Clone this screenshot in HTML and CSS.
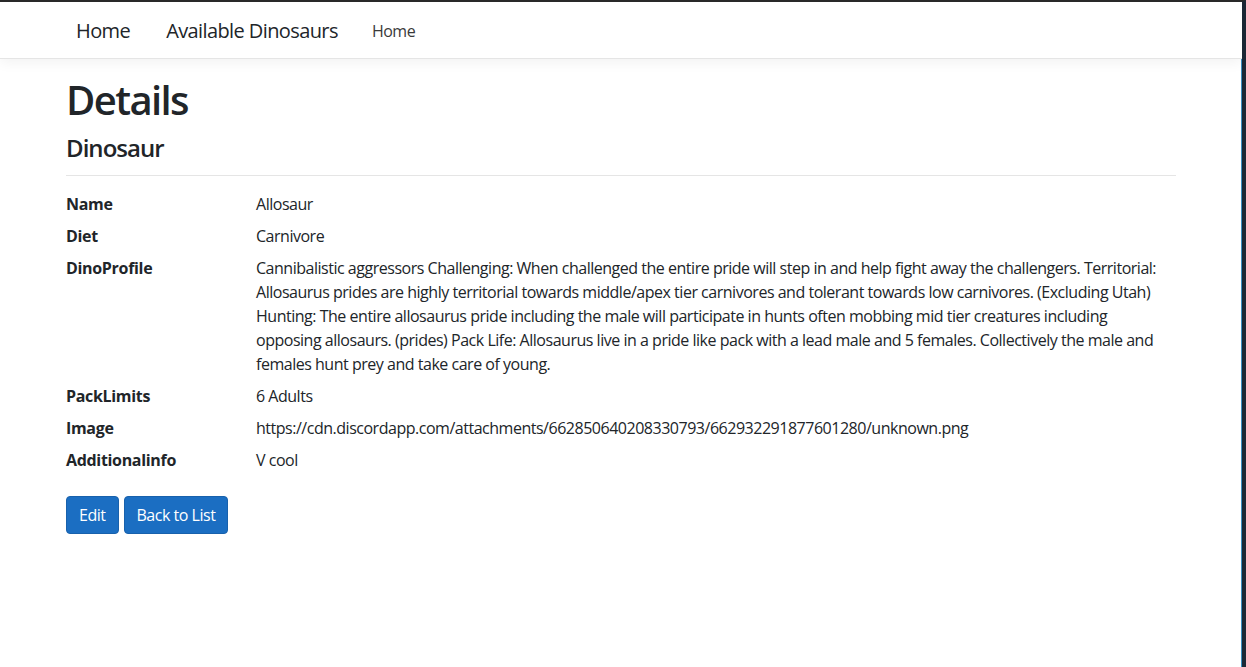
FILE: index.html
```html
<!DOCTYPE html>
<html lang="en">
<head>
<meta charset="utf-8">
<title>Details - Dinosaur</title>
<link rel="stylesheet" href="styles.css">
</head>
<body>
<div class="frame">
  <header class="topbar">
    <nav class="container nav">
      <a class="nav-big nav-home" href="#">Home</a>
      <a class="nav-big nav-dinos" href="#">Available Dinosaurs</a>
      <a class="nav-small" href="#">Home</a>
    </nav>
  </header>
  <main class="container main">
    <h1 class="title">Details</h1>
    <div>
      <h4 class="subtitle">Dinosaur</h4>
      <hr class="rule">
      <dl class="details">
        <dt>Name</dt>
        <dd>Allosaur</dd>
        <dt>Diet</dt>
        <dd>Carnivore</dd>
        <dt>DinoProfile</dt>
        <dd>Cannibalistic aggressors Challenging: When challenged the entire pride will step in and help fight away the challengers. Territorial: Allosaurus prides are highly territorial towards middle/apex tier carnivores and tolerant towards low carnivores. (Excluding Utah) Hunting: The entire allosaurus pride including the male will participate in hunts often mobbing mid tier creatures including opposing allosaurs. (prides) Pack Life: Allosaurus live in a pride like pack with a lead male and 5 females. Collectively the male and females hunt prey and take care of young.</dd>
        <dt>PackLimits</dt>
        <dd>6 Adults</dd>
        <dt>Image</dt>
        <dd>https://cdn.discordapp.com/attachments/662850640208330793/662932291877601280/unknown.png</dd>
        <dt>Additionalinfo</dt>
        <dd>V cool</dd>
      </dl>
    </div>
    <div class="actions">
      <a class="btn" href="#">Edit</a>
      <a class="btn" href="#">Back to List</a>
    </div>
  </main>
</div>
</body>
</html>
```
FILE: styles.css
```css
html, body {
  margin: 0;
  padding: 0;
  height: 100%;
}
body {
  font-family: "Open Sans", "Noto Sans", sans-serif;
  font-size: 16px;
  line-height: 1.5;
  letter-spacing: -0.03em;
  color: #212529;
  background: #fff;
}
.frame {
  box-sizing: border-box;
  min-height: 100%;
  border-top: 2px solid #2a2a2a;
  border-right: 4px solid #1c2836;
  box-shadow: inset -1px 0 0 #3b8fc4;
}
.container {
  box-sizing: border-box;
  max-width: 1140px;
  margin: 0 auto;
  padding: 0 15px;
}
.topbar {
  background: #fff;
  border-bottom: 1px solid #e5e5e5;
  box-shadow: 0 4px 12px rgba(0,0,0,.05);
  margin-bottom: 15px;
}
.nav {
  display: flex;
  align-items: center;
  height: 56px;
  padding-top: 2px;
}
.nav a {
  text-decoration: none;
  color: #212529;
}
.nav-big {
  font-size: 20px;
  letter-spacing: -0.03em;
  color: rgba(0,0,0,.9);
}
.nav-home { margin-left: 10px; }
.nav-dinos { margin-left: 36px; }
.nav-small {
  margin-left: 34px;
  font-size: 16px;
}
.nav .nav-small { color: #3a3a3a; }
.title {
  margin: 0 0 8px;
  padding-top: 2px;
  font-size: 40px;
  font-weight: 600;
  line-height: 1.2;
  letter-spacing: -0.04em;
}
.subtitle {
  margin: 0;
  font-size: 24px;
  font-weight: 600;
  line-height: 1.2;
  letter-spacing: -0.04em;
  padding-top: 2px;
}
.rule {
  margin: 12px 0 16px;
  border: 0;
  border-top: 1px solid rgba(0,0,0,.1);
}
.details {
  display: grid;
  grid-template-columns: 190px 1fr;
  margin: 0 0 16px;
}
.details dt {
  font-weight: 700;
  letter-spacing: -0.02em;
  margin: 0 0 8px;
}
.details dd {
  margin: 0 0 8px;
}
.actions {
  display: flex;
  gap: 5px;
}
.btn {
  display: inline-block;
  padding: 6px 12px;
  font-size: 16px;
  line-height: 24px;
  color: #fff;
  background: #1b6ec2;
  border: 1px solid #1861ac;
  border-radius: 4px;
  text-decoration: none;
}
```
